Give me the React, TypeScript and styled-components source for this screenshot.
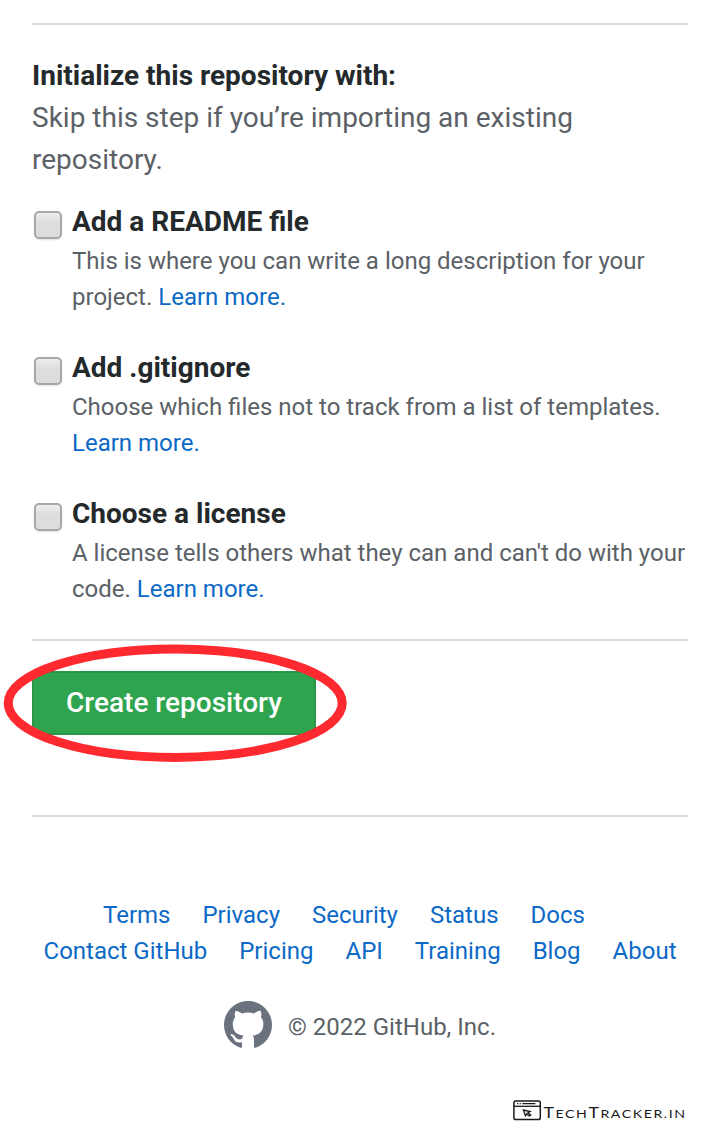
import React from "react";
import styled, { createGlobalStyle } from "styled-components";

const GlobalStyle = createGlobalStyle`
  * { box-sizing: border-box; }
  body {
    margin: 0;
    background: #fff;
    font-family: Roboto, "Liberation Sans", sans-serif;
    color: #24292c;
  }
`;

const Page = styled.main`
  min-height: 1145px;
  padding: 23px 32px 0;
  display: flex;
  flex-direction: column;
`;

const Rule = styled.hr<{ $after: number }>`
  width: 100%;
  height: 2px;
  flex: none;
  border: 0;
  margin: 0 0 ${(p) => p.$after}px;
  background: #dcdcdd;
`;

const Heading = styled.h2`
  margin: 0;
  font-size: 28px;
  line-height: 42px;
  font-weight: 700;
`;

const Hint = styled.p`
  margin: 0 0 20px;
  font-size: 28px;
  line-height: 42px;
  color: #5b6166;
`;

const Options = styled.div`
  display: flex;
  flex-direction: column;
  gap: 32px;
  margin-bottom: 32px;
`;

const Option = styled.label`
  display: flex;
  gap: 10px;
  padding-left: 2px;
`;

const Checkbox = styled.input.attrs({ type: "checkbox" })`
  appearance: none;
  flex: none;
  width: 28px;
  height: 28px;
  margin: 10px 0 0;
  border: 2px solid #a8a8a8;
  border-radius: 5px;
  background: linear-gradient(#eeeeee, #dedede 38%, #dcdcdc);
  box-shadow: 0 1px 2px rgba(0, 0, 0, 0.12);
`;

const OptionText = styled.div`
  flex: 1;
`;

const Description = styled.p`
  margin: 0;
  font-size: 24px;
  line-height: 36px;
  color: #5b6166;
  white-space: nowrap;
`;

const Link = styled.a`
  color: #0c69c6;
  text-decoration: none;
`;

const Submit = styled.div`
  position: relative;
  align-self: flex-start;
  margin-bottom: 80px;
`;

const Button = styled.button`
  display: block;
  width: 284px;
  height: 64px;
  padding: 0;
  border: 2px solid #2a964a;
  border-radius: 3px;
  background: #2ea44f;
  color: #fff;
  font: 500 28px/40px Roboto, "Liberation Sans", sans-serif;
`;

const Highlight = styled.svg`
  position: absolute;
  left: -32px;
  top: -31px;
  pointer-events: none;
`;

const FooterLinks = styled.nav<{ $indent?: number }>`
  display: flex;
  justify-content: center;
  gap: 32px;
  padding-right: ${(p) => p.$indent ?? 0}px;
  font-size: 24px;
  line-height: 36px;
  white-space: nowrap;
`;

const Copyright = styled.div`
  display: flex;
  align-items: center;
  justify-content: center;
  gap: 16px;
  margin-top: 32px;
  height: 48px;
  font-size: 24px;
  line-height: 36px;
  color: #5b6166;
`;

const CopyrightText = styled.span`
  padding-top: 4px;
`;

const Watermark = styled.svg`
  align-self: flex-end;
  margin-top: 48px;
`;

const WatermarkText = styled.text`
  font-family: Lato, sans-serif;
  font-size: 12px;
  fill: #1a1a1a;
`;

const Initial = styled.tspan`
  font-size: 15px;
`;

const options = [
  {
    title: "Add a README file",
    lines: ["This is where you can write a long description for your", "project. "],
  },
  {
    title: "Add .gitignore",
    lines: ["Choose which files not to track from a list of templates.", ""],
  },
  {
    title: "Choose a license",
    lines: ["A license tells others what they can and can't do with your", "code. "],
  },
];

const primaryLinks = ["Terms", "Privacy", "Security", "Status", "Docs"];
const secondaryLinks = ["Contact GitHub", "Pricing", "API", "Training", "Blog", "About"];

export default function App() {
  return (
    <>
      <GlobalStyle />
      <Page>
        <Rule $after={30} />
        <Heading>Initialize this repository with:</Heading>
        <Hint>Skip this step if you’re importing an existing repository.</Hint>
        <Options>
          {options.map((o) => (
            <Option key={o.title}>
              <Checkbox />
              <OptionText>
                <Heading as="div">{o.title}</Heading>
                <Description>
                  {o.lines[0]}
                  <br />
                  {o.lines[1]}
                  <Link>Learn more.</Link>
                </Description>
              </OptionText>
            </Option>
          ))}
        </Options>
        <Rule $after={30} />
        <Submit>
          <Button>Create repository</Button>
          <Highlight width="352" height="128" viewBox="0 0 352 128">
            <ellipse cx="175.2" cy="63.2" rx="167" ry="54.2" fill="none" stroke="#fe2a2f" strokeWidth="9" />
          </Highlight>
        </Submit>
        <Rule $after={80} />
        <FooterLinks $indent={32}>
          {primaryLinks.map((l) => (
            <Link key={l}>{l}</Link>
          ))}
        </FooterLinks>
        <FooterLinks>
          {secondaryLinks.map((l) => (
            <Link key={l}>{l}</Link>
          ))}
        </FooterLinks>
        <Copyright>
          <svg width="48" height="48" viewBox="0 0 16 16" fill="#6a737d">
            <path
              fillRule="evenodd"
              d="M8 0C3.58 0 0 3.58 0 8c0 3.54 2.29 6.53 5.47 7.59.4.07.55-.17.55-.38 0-.19-.01-.82-.01-1.49-2.01.37-2.53-.49-2.69-.94-.09-.23-.48-.94-.82-1.13-.28-.15-.68-.52-.01-.53.63-.01 1.08.58 1.23.82.72 1.21 1.87.87 2.33.66.07-.52.28-.87.51-1.07-1.78-.2-3.64-.89-3.64-3.95 0-.87.31-1.59.82-2.15-.08-.2-.36-1.02.08-2.12 0 0 .67-.21 2.2.82.64-.18 1.32-.27 2-.27.68 0 1.36.09 2 .27 1.53-1.04 2.2-.82 2.2-.82.44 1.1.16 1.92.08 2.12.51.56.82 1.27.82 2.15 0 3.07-1.87 3.75-3.65 3.95.29.25.54.73.54 1.48 0 1.07-.01 1.93-.01 2.2 0 .21.15.46.55.38A8.013 8.013 0 0016 8c0-4.42-3.58-8-8-8z"
            />
          </svg>
          <CopyrightText>© 2022 GitHub, Inc.</CopyrightText>
        </Copyright>
        <Watermark width="176" height="26" viewBox="0 0 176 26">
          <g fill="none" stroke="#1a1a1a" strokeWidth="1.5">
            <rect x="1.9" y="4" width="26.4" height="18.6" rx="1.8" />
            <path d="M2 9.3H28" strokeWidth="1.3" />
            <path d="M5 6.6h1.2M7.6 6.6h1.2M10.4 6.6h13" strokeWidth="1.1" />
            <path d="M11.4 13l6.8 1.5-2.3 1.3 2.9 2.1-1.4 1.1-2.7-2-1.3 1.8z" strokeWidth="1.3" />
          </g>
          <g transform="translate(31.5 20.7) scale(1.18 1)">
            <WatermarkText textLength="120" lengthAdjust="spacing">
              <Initial>T</Initial>ECH<Initial>T</Initial>RACKER.IN
            </WatermarkText>
          </g>
        </Watermark>
      </Page>
    </>
  );
}
